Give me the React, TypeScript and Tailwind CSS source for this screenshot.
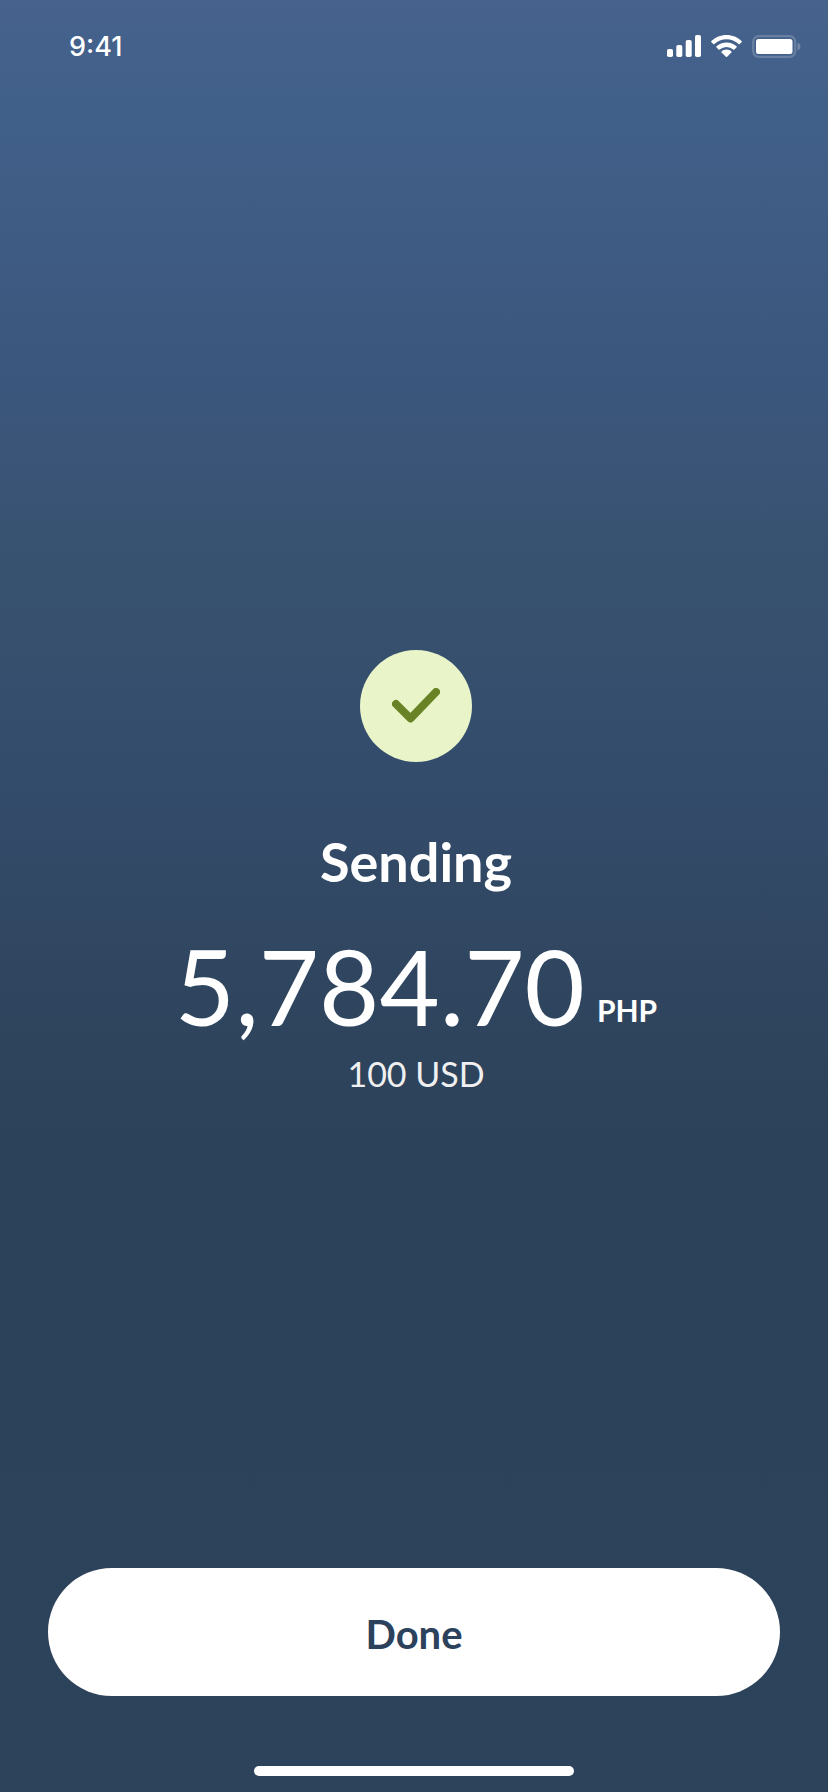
import React from "react";

function StatusBar() {
  return (
    <header className="flex h-[92px] shrink-0 items-center justify-between pr-[27px] pl-[69px]">
      <time className="pt-0.5 font-['Inter',sans-serif] text-[27px] leading-8 font-medium">9:41</time>
      <div className="flex items-center gap-2.5">
        <svg className="h-[22px] w-[34px]" viewBox="0 0 34 22" fill="currentColor" aria-label="Signal">
          <rect x="0" y="14" width="6" height="8" rx="1.8" />
          <rect x="9.3" y="10" width="6" height="12" rx="1.8" />
          <rect x="18.7" y="5" width="6" height="17" rx="1.8" />
          <rect x="28" y="0" width="6" height="22" rx="1.8" />
        </svg>
        <svg className="h-[22px] w-[31px]" viewBox="0 0 31 22" fill="currentColor" aria-label="Wi-Fi">
          <path d="M15.5 0C21.4 0 26.7 2.3 30.6 6Q31.2 6.6 30.6 7.200L28.700 9.100Q28.200 9.600 27.600 9.100A17.500 17.500 0 0 0 3.400 9.100Q2.800 9.600 2.300 9.100L.4 7.200Q-.2 6.600 .4 6C4.300 2.300 9.600 0 15.500 0Z" />
          <path d="M15.500 7.400C19.400 7.400 22.900 8.900 25.500 11.300Q26.100 11.900 25.500 12.500L23.400 14.500Q22.900 15 22.300 14.500A10.300 10.300 0 0 0 8.700 14.500Q8.100 15 7.600 14.500L5.500 12.500Q4.900 11.900 5.500 11.300C8.100 8.900 11.600 7.400 15.500 7.400Z" />
          <path d="M15.500 14.600C17.400 14.600 19.100 15.300 20.400 16.400Q21 17 20.400 17.600L16.100 21.700Q15.500 22.200 14.900 21.700L10.600 17.600Q10 17 10.600 16.400C11.900 15.300 13.600 14.600 15.500 14.600Z" />
        </svg>
        <svg className="h-[23px] w-[49px]" viewBox="0 0 49 23" fill="currentColor" aria-label="Battery">
          <rect x="1.200" y="1.200" width="42" height="20.600" rx="5.500" fill="none" stroke="currentColor" strokeWidth="2.200" opacity=".2" />
          <rect x="4" y="4" width="36.500" height="15" rx="2.500" />
          <path d="M45.500 7.500Q48.500 9 48.500 11.500T45.500 15.500Z" opacity=".25" />
        </svg>
      </div>
    </header>
  );
}

export default function App() {
  return (
    <div className="flex min-h-screen flex-col bg-[linear-gradient(180deg,#46628d_0%,#416089_6%,#3c577e_20%,#37526f_32%,#344c6c_43%,#304660_54%,#2c425a_64%,#2d435b_100%)] font-['Lato',sans-serif] text-white">
      <StatusBar />
      <main className="flex grow flex-col items-center justify-between px-12 pb-[70px]">
        <section className="flex flex-col items-center pt-[558px] pl-1">
          <div className="flex size-28 items-center justify-center rounded-full bg-[#e9f5c8]">
            <svg className="h-9 w-12" viewBox="0 0 48 36" fill="none" stroke="#6a8226" strokeWidth="8" strokeLinecap="round" strokeLinejoin="round" aria-hidden="true">
              <path d="M4 16 18.500 30.500 44 4" />
            </svg>
          </div>
          <h1 className="mt-[70px] text-[54px] leading-[60px] font-bold">Sending</h1>
          <p className="mt-[34px] flex items-end gap-3">
            <span className="text-[104px] leading-[120px]">5,784.70</span>
            <span className="pb-[18px] text-[30px] leading-9 font-bold">PHP</span>
          </p>
          <p className="mt-2 text-[34px] leading-10 text-[#f0f0f0]">100 USD</p>
        </section>
        <button type="button" className="h-32 w-full rounded-full bg-white pt-1 text-[40px] leading-[46px] font-bold text-[#2c425c]">
          Done
        </button>
      </main>
      <div className="mb-4 h-2.5 w-80 shrink-0 self-center rounded-full bg-white" />
    </div>
  );
}
